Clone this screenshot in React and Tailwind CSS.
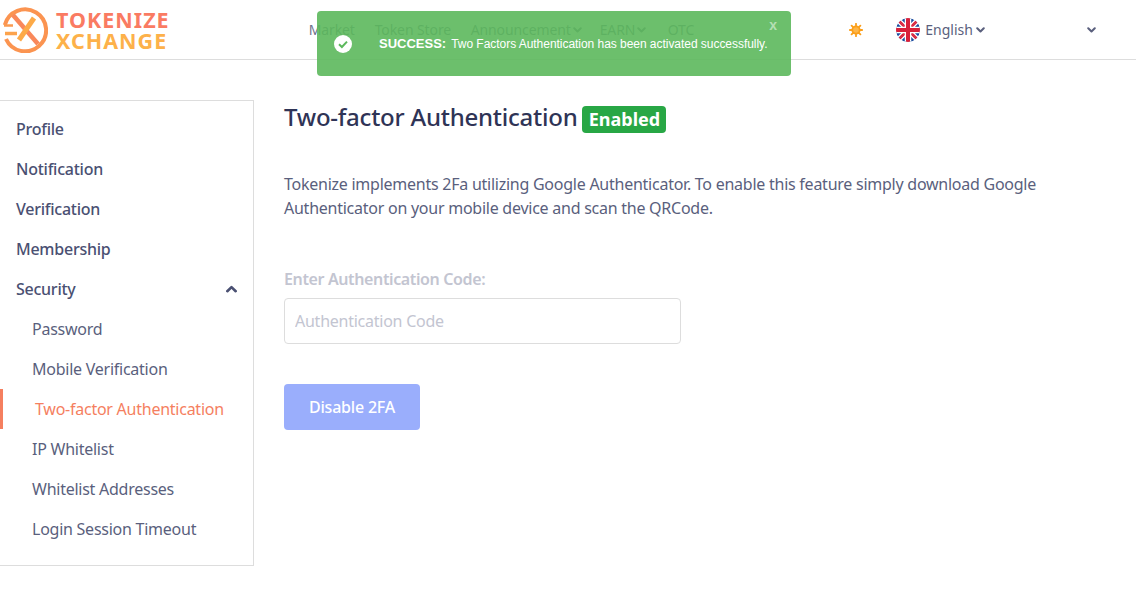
import React from "react";

const F = { fontFamily: '"Noto Sans", sans-serif' };

function Chev({ className = "", up = false }) {
  return (
    <svg viewBox="0 0 10 7" className={className} fill="none" stroke="currentColor" strokeWidth="2.4" strokeLinecap="round" strokeLinejoin="round">
      <path d={up ? "M1.2 5.5 5 1.8 8.8 5.5" : "M1.2 1.5 5 5.2 8.8 1.5"} />
    </svg>
  );
}

function Logo() {
  return (
    <div className="flex items-center gap-[8px] ml-[2px]">
      <svg width="46" height="46" viewBox="0 0 46 46" fill="none">
        <defs>
          <linearGradient id="lg" x1="0" y1="46" x2="46" y2="0">
            <stop offset="0" stopColor="#fdb045" />
            <stop offset="1" stopColor="#f9785c" />
          </linearGradient>
        </defs>
        <path d="M2.8 18A21 21 0 1 1 4 32" stroke="url(#lg)" strokeWidth="4" />
        <path d="M2 18.5H11" stroke="#fa9a50" strokeWidth="2.5" />
        <path d="M3 26.5H15" stroke="#fca34c" strokeWidth="3.5" />
        <path d="M11 8 36 37" stroke="#f9885a" strokeWidth="4.5" />
        <path d="M32 11 17 33" stroke="#fdaa48" strokeWidth="5" />
      </svg>
      <div className="flex flex-col font-bold text-[21.5px] leading-[21px] tracking-[1px]" style={{ fontFamily: '"Noto Sans", sans-serif' }}>
        <span className="text-[#fa7b62]">TOKENIZE</span>
        <span className="text-[#fdb14a]">XCHANGE</span>
      </div>
    </div>
  );
}

function Flag() {
  return (
    <svg width="24" height="24" viewBox="0 0 24 24" className="rounded-full">
      <defs>
        <clipPath id="fc"><circle cx="12" cy="12" r="12" /></clipPath>
      </defs>
      <g clipPath="url(#fc)">
        <rect width="24" height="24" fill="#1c4ea0" />
        <path d="M0 2 22 24M2 0 24 22M24 2 2 24M22 0 0 22" stroke="#fff" strokeWidth="2.5" />
        <path d="M0 1 23 24M24 23 1 0M24 1 1 24M23 0 0 23" stroke="#d8203a" strokeWidth="1.3" />
        <path d="M12 0V24M0 12H24" stroke="#fff" strokeWidth="6.5" />
        <path d="M12 0V24M0 12H24" stroke="#d8203a" strokeWidth="4" />
      </g>
    </svg>
  );
}

function Sun() {
  return (
    <svg width="14" height="14" viewBox="0 0 14 14">
      <g stroke="#fb9f1a" strokeWidth="1.8" strokeLinecap="round">
        <path d="M7 .8V13.2M.8 7H13.2M2.6 2.6 11.4 11.4M11.4 2.6 2.6 11.4" />
      </g>
      <circle cx="7" cy="7" r="4.6" fill="#fb9f1a" />
      <circle cx="7" cy="7" r="2.8" fill="#fdb64a" />
    </svg>
  );
}

function Row({ children, cls = "", right }) {
  return (
    <div className={`h-10 flex items-center justify-between ${cls}`}>
      <span>{children}</span>
      {right}
    </div>
  );
}

export default function App() {
  return (
    <div className="relative min-h-[591px] bg-white text-[#5a5f7d] overflow-hidden" style={F}>
      <header className="h-[60px] border-b border-[#dddddd] flex items-center">
        <Logo />
        <nav className="flex items-center text-[14px] text-[#6b6f8a] ml-[139px] tracking-[-0.1px]">
          <span className="w-[66px]">Market</span>
          <span className="w-[96px]">Token Store</span>
          <span className="w-[129px] flex items-center gap-[2px]">Announcement<Chev className="w-[9px] h-[6px]" /></span>
          <span className="w-[68px] flex items-center gap-[2px]">EARN<Chev className="w-[9px] h-[6px]" /></span>
          <span>OTC</span>
        </nav>
        <div className="flex items-center ml-[155px]"><Sun /></div>
        <div className="flex items-center ml-[33px] text-[14px] text-[#5a5f7d]">
          <Flag />
          <span className="ml-[5px]">English</span>
          <Chev className="w-[9px] h-[6px] ml-[3px]" />
        </div>
        <Chev className="w-[9px] h-[6px] ml-[102px] text-[#5a5f7d]" />
      </header>

      <div className="flex mt-[40px] items-start">
        <aside className="w-[254px] h-[466px] border border-l-0 border-[#dddddd] pt-[8px] text-[16px] tracking-[-0.25px]">
          <div className="font-medium text-[#4a5072]">
            <Row cls="pl-4">Profile</Row>
            <Row cls="pl-4">Notification</Row>
            <Row cls="pl-4">Verification</Row>
            <Row cls="pl-4">Membership</Row>
            <Row cls="pl-4 pr-4" right={<Chev up className="w-[11px] h-[8px]" />}>Security</Row>
          </div>
          <Row cls="pl-8">Password</Row>
          <Row cls="pl-8">Mobile Verification</Row>
          <Row cls="pl-[32px] border-l-[3px] border-[#f57f5f] text-[#f57f5f]">Two-factor Authentication</Row>
          <Row cls="pl-8">IP Whitelist</Row>
          <Row cls="pl-8">Whitelist Addresses</Row>
          <Row cls="pl-8">Login Session Timeout</Row>
        </aside>

        <main className="ml-[30px] flex-1">
          <div className="flex items-start mt-[6px]">
            <h1 className="text-[24px] leading-[22px] font-medium text-[#2f3456] tracking-[-0.24px]">Two-factor Authentication</h1>
            <span className="ml-[5px] h-[27px] w-[84px] rounded-[4px] bg-[#28a745] text-white font-bold text-[18px] flex items-center justify-center">Enabled</span>
          </div>
          <p className="mt-[39px] w-[800px] text-[16px] leading-[24px] tracking-[-0.25px]">
            Tokenize implements 2Fa utilizing Google Authenticator. To enable this feature simply download Google Authenticator on your mobile device and scan the QRCode.
          </p>
          <label className="block mt-[47px] text-[16px] leading-[24px] font-semibold text-[#c3c5d1] tracking-[-0.37px]">Enter Authentication Code:</label>
          <input
            placeholder="Authentication Code"
            className="block mt-[7px] w-[397px] h-[46px] px-[10px] rounded-[4px] border border-[#dddddd] text-[16px] tracking-[-0.25px] placeholder:text-[#c3c5d1] outline-none"
          />
          <button className="mt-[40px] w-[136px] h-[46px] rounded-[4px] bg-[#9aaefc] text-white font-medium text-[16px] tracking-[-0.2px]">Disable 2FA</button>
        </main>
      </div>

      <div className="absolute left-[317px] top-[11px] w-[474px] h-[65px] rounded-[4px] bg-[#5cb85c]/90 text-white" style={{ fontFamily: '"Liberation Sans", sans-serif' }}>
        <svg width="18" height="18" viewBox="0 0 18 18" className="absolute left-[17px] top-[24px]">
          <circle cx="9" cy="9" r="9" fill="#fff" />
          <path d="M5 9.3 7.9 12 13 6.6" fill="none" stroke="#5cb85c" strokeWidth="2" />
        </svg>
        <div className="absolute left-[62px] top-[23px] flex items-baseline whitespace-nowrap">
          <b className="text-[13px]">SUCCESS:</b>
          <span className="text-[12px] ml-[5px] tracking-[-0.04px]">Two Factors Authentication has been activated successfully.</span>
        </div>
        <span className="absolute right-[14px] top-[4px] font-bold text-[14px] text-white/50">x</span>
      </div>
    </div>
  );
}
